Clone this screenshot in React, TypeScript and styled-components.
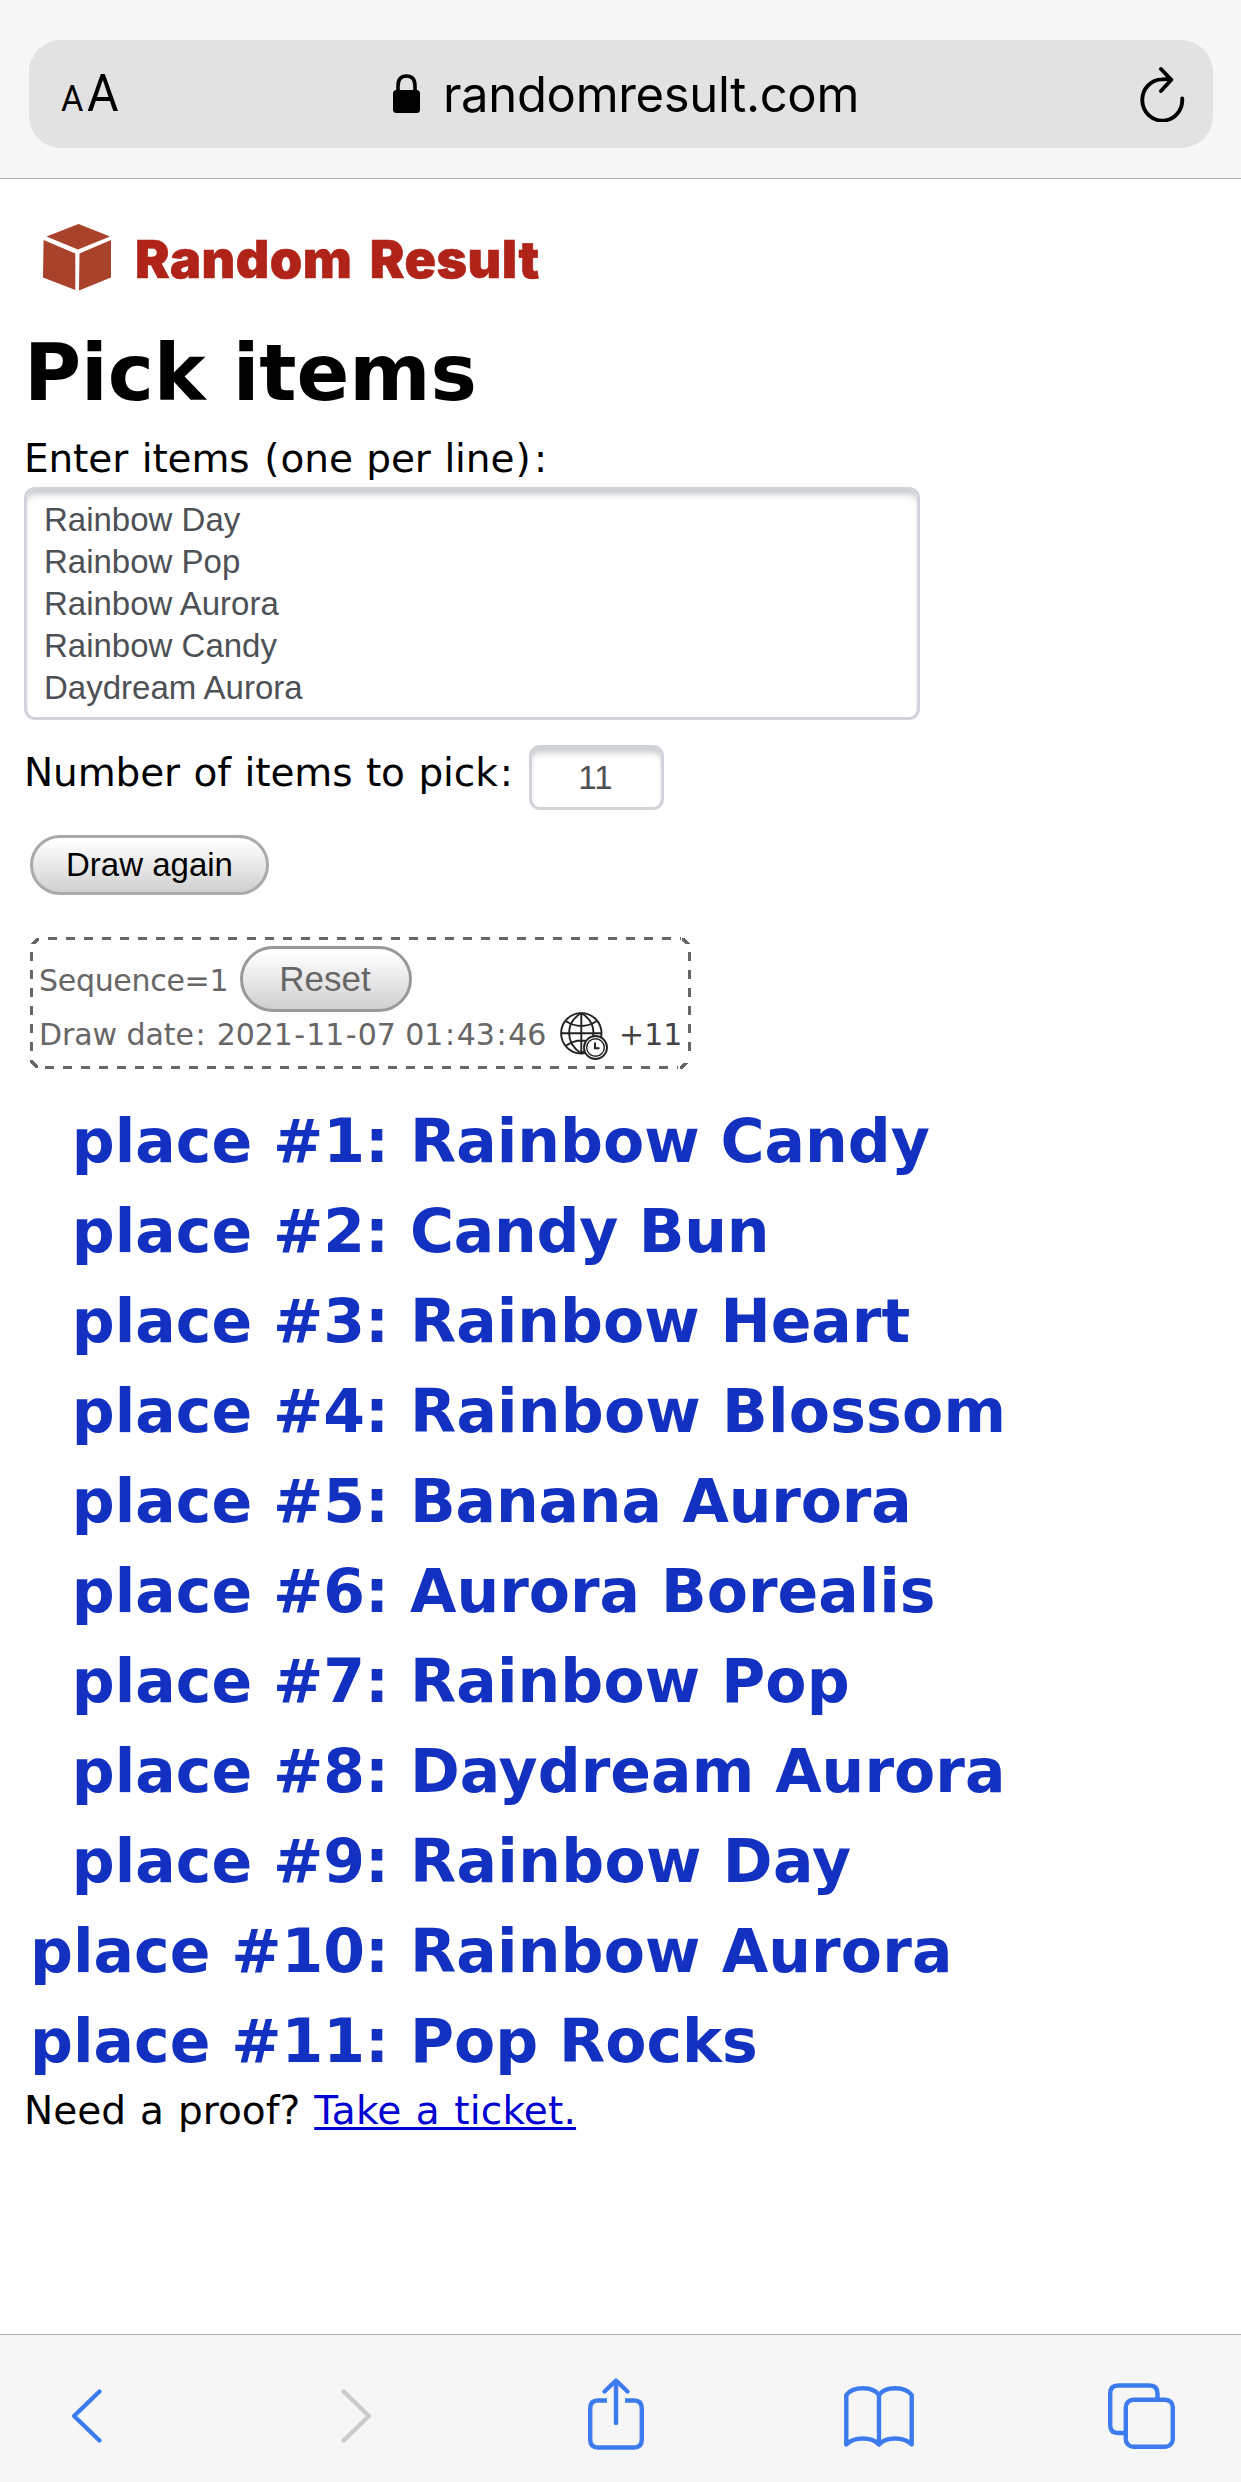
import React from 'react';
import styled, { createGlobalStyle } from 'styled-components';

const verdana = 'Verdana, "DejaVu Sans", sans-serif';
const arial = '"Liberation Sans", Arial, sans-serif';

const GlobalStyle = createGlobalStyle`
  * { box-sizing: border-box; }
  body { margin: 0; background: #fefefe; color: #000; font-family: ${verdana}; }
  svg { display: block; flex: none; }
`;

const Screen = styled.div`
  display: flex;
  flex-direction: column;
  width: 1241px;
  height: 2482px;
  overflow: hidden;
`;

const TopBar = styled.header`
  height: 179px;
  padding: 40px 28px 0 29px;
  background: #f7f7f7;
  border-bottom: 1px solid #b0b0b2;
`;

const AddressBar = styled.div`
  display: grid;
  grid-template-columns: 332px 1fr auto;
  align-items: center;
  height: 108px;
  padding: 0 27px 0 32px;
  border-radius: 32px;
  background: #e2e2e2;
`;

const TextSize = styled.div`
  display: flex;
  align-items: baseline;
  gap: 4px;
  padding-top: 5px;
  font-family: Roboto, sans-serif;
  line-height: 50px;
`;

const Letter = styled.span<{ $size: number; $width: number }>`
  width: ${p => p.$width}px;
  font-size: ${p => p.$size}px;
  transform: scaleX(0.95);
  transform-origin: left;
`;

const Site = styled.div`
  display: flex;
  align-items: center;
  gap: 23px;
`;

const Domain = styled.span`
  padding-top: 2px;
  font: 400 49px/60px Inter, sans-serif;
  letter-spacing: -0.33px;
`;

const Page = styled.main`
  flex: 1;
  display: flex;
  flex-direction: column;
  align-items: flex-start;
  padding: 37px 24px 0;
`;

const Brand = styled.div`
  display: flex;
  align-items: center;
  gap: 22px;
  height: 84px;
  padding-left: 19px;
`;

const BrandName = styled.span`
  padding-top: 3px;
  font: 900 52px/60px Inter, sans-serif;
  letter-spacing: 0.5px;
  word-spacing: 6.5px;
  color: #b02318;
  -webkit-text-stroke: 0.6px #b02318;
`;

const Title = styled.h1`
  margin: 28px 0 13px;
  font: bold 78px/90px ${verdana};
  letter-spacing: -0.1px;
`;

const Label = styled.label`
  font-size: 39px;
  line-height: 56px;
  letter-spacing: -0.12px;
  word-spacing: 0.034em;
  white-space: nowrap;
`;

const Wide = styled.span<{ $pad: number }>`
  padding: 0 ${p => p.$pad}em;
`;

const Field = styled.div`
  border: 3px solid #d0d3d7;
  border-radius: 11px;
  background: #fff;
  box-shadow: inset 0 7px 7px -3px #c4c5c7;
  color: #4d5156;
  font: 33px/42px ${arial};
`;

const ItemsField = styled(Field)`
  width: 896px;
  height: 233px;
  padding: 9px 18px 0 17px;
`;

const CountField = styled(Field)`
  width: 135px;
  height: 65px;
  padding: 9px 2px 0 0;
  text-align: center;
`;

const CountRow = styled.div`
  display: flex;
  align-items: flex-start;
  gap: 15px;
  height: 65px;
  margin-top: 25px;
`;

const CountLabel = styled(Label)`
  width: 490px;
`;

const PillButton = styled.button`
  display: flex;
  align-items: center;
  justify-content: center;
  padding: 0;
  border: 3px solid #aaa;
  border-radius: 40px;
  background: linear-gradient(#fff 10%, #cdcdcd) border-box;
  font-family: ${arial};
`;

const DrawButton = styled(PillButton)`
  width: 239px;
  height: 60px;
  margin: 25px 0 0 6px;
  font-size: 33px;
  color: #000;
`;

const ResetButton = styled(PillButton)`
  width: 172px;
  height: 66px;
  padding-right: 2px;
  border-color: #999;
  font-size: 35px;
  color: #666;
`;

const dash = '#666 0 9px, transparent 9px 18.05px';

const DrawInfo = styled.section`
  width: 661px;
  height: 132px;
  margin: 42px 0 0 6px;
  padding: 9px 0 0 9px;
  color: #666;
  font-size: 30px;
  background:
    repeating-linear-gradient(90deg, ${dash}) 18px 0 / 633px 3px,
    repeating-linear-gradient(90deg, ${dash}) 15px 129px / 633px 3px,
    repeating-linear-gradient(180deg, ${dash}) 0 15px / 3px 104px,
    repeating-linear-gradient(180deg, ${dash}) 658px 15px / 3px 106px,
    linear-gradient(135deg, transparent 4.2px, #666 4.2px 7.2px, transparent 7.2px) 1px 1px / 8px 6px,
    linear-gradient(225deg, transparent 4.2px, #666 4.2px 7.2px, transparent 7.2px) 652px 1px / 8px 6px,
    linear-gradient(45deg, transparent 4.2px, #666 4.2px 7.2px, transparent 7.2px) 0 123px / 8px 8px,
    linear-gradient(315deg, transparent 4.2px, #666 4.2px 7.2px, transparent 7.2px) 650px 126px / 8px 6px;
  background-repeat: no-repeat;
`;

const SequenceRow = styled.div`
  display: flex;
  align-items: center;
  height: 66px;
`;

const Sequence = styled.span`
  width: 201px;
  padding-top: 4px;
  line-height: 40px;
  letter-spacing: -0.3px;
`;

const DateRow = styled.div`
  display: flex;
  align-items: flex-start;
  height: 48px;
`;

const DateText = styled.span`
  width: 521px;
  line-height: 45px;
  letter-spacing: -0.08px;
  white-space: nowrap;
`;

const Zone = styled.span`
  margin-left: 11px;
  line-height: 45px;
  color: #444;
`;

const Results = styled.ol`
  margin: 27px 0 0 6px;
  padding: 0;
  list-style: none;
`;

const Result = styled.li`
  display: grid;
  grid-template-columns: 359px auto;
  column-gap: 21px;
  font: bold 60px/90px ${verdana};
  color: #1231c0;
  white-space: nowrap;
`;

const Place = styled.span`
  text-align: right;
`;

const Winner = styled.span<{ $tracking: number }>`
  letter-spacing: ${p => p.$tracking}px;
`;

const Proof = styled.p`
  margin: 0;
  font-size: 39px;
  line-height: 50px;
  word-spacing: 0.044em;
`;

const TicketLink = styled.a`
  color: #0000d2;
  letter-spacing: 0.2px;
  text-decoration: underline;
  text-decoration-thickness: 2.5px;
  text-underline-offset: 3px;
  text-decoration-skip-ink: none;
`;

const BottomBar = styled.nav`
  display: grid;
  grid-template-columns: 270px 247px 256px 264px 67px;
  height: 148px;
  padding: 43px 0 0 71px;
  background: #f6f6f6;
  border-top: 1px solid #b0b0b2;
`;

const NavIcon = styled.svg<{ $muted?: boolean }>`
  height: 76px;
  overflow: visible;
  fill: none;
  stroke: ${p => (p.$muted ? '#cbcbcb' : '#3b7bee')};
  stroke-width: 4.4;
  stroke-linecap: round;
  stroke-linejoin: round;
`;

const items = ['Rainbow Day', 'Rainbow Pop', 'Rainbow Aurora', 'Rainbow Candy', 'Daydream Aurora'];

const winners: { name: string; tracking: number }[] = [
  { name: 'Rainbow Candy', tracking: 0 },
  { name: 'Candy Bun', tracking: -0.25 },
  { name: 'Rainbow Heart', tracking: 0 },
  { name: 'Rainbow Blossom', tracking: 0.2 },
  { name: 'Banana Aurora', tracking: -0.15 },
  { name: 'Aurora Borealis', tracking: 0 },
  { name: 'Rainbow Pop', tracking: 0.1 },
  { name: 'Daydream Aurora', tracking: 0.05 },
  { name: 'Rainbow Day', tracking: 0.3 },
  { name: 'Rainbow Aurora', tracking: 0.15 },
  { name: 'Pop Rocks', tracking: 0 },
];

const Colon = () => <Wide $pad={0.058}>:</Wide>;
const Hyphen = () => <Wide $pad={0.046}>-</Wide>;

const LockIcon = () => (
  <svg width="27" height="40" viewBox="0 0 27 40">
    <path d="M5 18V12Q5 2 13.5 2T22 12V18" fill="none" stroke="#000" strokeWidth="3.6" />
    <rect y="16" width="27" height="23" rx="3.5" />
  </svg>
);

const ReloadIcon = () => (
  <svg width="46" height="56" viewBox="0 0 46 56" fill="none" stroke="#000" strokeWidth="3.9" strokeLinecap="round" strokeLinejoin="round">
    <path d="M42.2 32.5A20 20.6 0 1 1 22.2 13.4C26 12.7 28 13.4 31.3 13.8M21 3L31.3 13.8L21 25" />
  </svg>
);

const CubeIcon = () => (
  <svg width="70" height="68" viewBox="0 0 70 68" fill="#a9422b">
    <path d="M35.5 0L67 12.6L35 25.5L3.5 12.6ZM.6 16L32.3 29.5V66L0 53.6ZM68 16V53.6L36 66.5L36.5 29.5Z" />
  </svg>
);

const GlobeClockIcon = () => (
  <svg width="48" height="48" viewBox="0 0 48 48" fill="none" stroke="#222" strokeWidth="1.9">
    <circle cx="21.3" cy="21.3" r="20.2" />
    <path d="M21.3 1V41M1 21.3H41.5M21.3 1C5 11 5 31 21.3 41.5M21.3 1C37.6 11 37.6 31 21.3 41.5M5.5 9Q21.3 19 37 9M5.5 34Q21.3 23 37 34" />
    <circle cx="35.5" cy="35.5" r="11.5" fill="#fff" />
    <circle cx="35.5" cy="35.5" r="8.8" strokeWidth="1.4" />
    <path d="M35 30.5V36.3H39.5" strokeWidth="2" />
  </svg>
);

export default function App() {
  return (
    <Screen>
      <GlobalStyle />
      <TopBar>
        <AddressBar>
          <TextSize>
            <Letter $size={36} $width={22}>A</Letter>
            <Letter $size={51} $width={34}>A</Letter>
          </TextSize>
          <Site>
            <LockIcon />
            <Domain>randomresult.com</Domain>
          </Site>
          <ReloadIcon />
        </AddressBar>
      </TopBar>

      <Page>
        <Brand>
          <CubeIcon />
          <BrandName>Random Result</BrandName>
        </Brand>
        <Title>Pick items</Title>
        <Label>
          Enter items <Wide $pad={0.03}>(</Wide>one per line<Wide $pad={0.03}>)</Wide><Colon />
        </Label>
        <ItemsField>
          {items.map(item => <div key={item}>{item}</div>)}
        </ItemsField>
        <CountRow>
          <CountLabel>Number of items to pick<Colon /></CountLabel>
          <CountField>11</CountField>
        </CountRow>
        <DrawButton>Draw again</DrawButton>
        <DrawInfo>
          <SequenceRow>
            <Sequence>Sequence=1</Sequence>
            <ResetButton>Reset</ResetButton>
          </SequenceRow>
          <DateRow>
            <DateText>
              Draw date<Colon /> 2021<Hyphen />11<Hyphen />07 01<Colon />43<Colon />46
            </DateText>
            <GlobeClockIcon />
            <Zone>+11</Zone>
          </DateRow>
        </DrawInfo>
        <Results>
          {winners.map(({ name, tracking }, i) => (
            <Result key={name}>
              <Place>place #{i + 1}:</Place>
              <Winner $tracking={tracking}>{name}</Winner>
            </Result>
          ))}
        </Results>
        <Proof>Need a proof? <TicketLink>Take a ticket.</TicketLink></Proof>
      </Page>

      <BottomBar>
        <NavIcon width="31" viewBox="0 0 31 76"><path d="M28.5 13.5L3 38L28.5 62.5" /></NavIcon>
        <NavIcon width="31" viewBox="0 0 31 76" $muted><path d="M2.5 13.5L28 38L2.5 62.5" /></NavIcon>
        <NavIcon width="56" viewBox="0 0 56 76">
          <path d="M28 3V45M16.5 13.5L28 2.5L39.5 13.5" />
          <path d="M19 22.5H10Q2.2 22.5 2.2 30.5V61.5Q2.2 69.5 10 69.5H46Q53.8 69.5 53.8 61.5V30.5Q53.8 22.5 46 22.5H37" strokeLinecap="butt" />
        </NavIcon>
        <NavIcon width="70" viewBox="0 0 70 76">
          <path d="M35 17C29 8 9 8 2.3 17V66.5C10 58.5 28 58.5 35 66.5C42 58.5 60 58.5 67.7 66.5V17C61 8 41 8 35 17V66.5" />
        </NavIcon>
        <NavIcon width="67" viewBox="0 0 67 76">
          <path d="M17 55H10Q2.2 55 2.2 47V15.5Q2.2 7.5 10 7.5H41.5Q49.5 7.5 49.5 15.5V21.5" strokeLinecap="butt" />
          <rect x="17.8" y="21.7" width="47" height="47" rx="7.5" />
        </NavIcon>
      </BottomBar>
    </Screen>
  );
}
